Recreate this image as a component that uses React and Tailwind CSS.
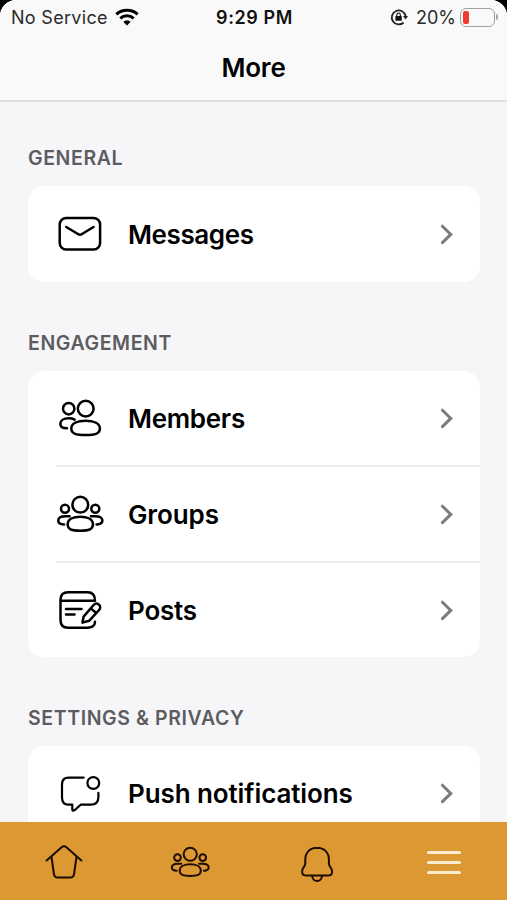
function Icon({ className = 'size-12', strokeWidth = 2.5, box = 48, children }) {
  return (
    <svg
      viewBox={`0 0 ${box} ${box}`}
      className={className}
      fill="none"
      stroke="currentColor"
      strokeWidth={strokeWidth}
      strokeLinecap="round"
      strokeLinejoin="round"
    >
      {children}
    </svg>
  );
}

function MailIcon() {
  return (
    <Icon>
      <rect x="3.7" y="8" width="40.4" height="31.6" rx="6.5" />
      <path d="M10.2 17 L22 24 Q24 25.4 26 24 L37.5 17" />
    </Icon>
  );
}

function MembersIcon() {
  return (
    <Icon>
      <circle cx="29.7" cy="14.6" r="7.9" />
      <circle cx="12.7" cy="14.7" r="5.7" />
      <path d="M29.6 26.7 C37 26.7 43.9 29 43.9 34.6 C43.9 40 38.6 41 29.6 41 C20.6 41 15.3 40 15.3 34.6 C15.3 29 22 26.7 29.6 26.7 Z" />
      <path d="M18.6 25.6 C16.8 24.6 14.8 24.3 12.6 24.3 C8 24.3 4.3 26.4 4.3 30 C4.3 33.2 7 34.3 11 34.3" />
    </Icon>
  );
}

function GroupsIcon({ className, strokeWidth }) {
  return (
    <Icon className={className} strokeWidth={strokeWidth}>
      <circle cx="24.3" cy="14.7" r="7.9" />
      <circle cx="9" cy="18.7" r="4" />
      <circle cx="39.3" cy="18.7" r="4" />
      <path d="M24.3 26.7 C31 26.7 37 29 37 34.3 C37 39.6 32.5 40.7 24.3 40.7 C16.1 40.7 11.6 39.6 11.6 34.3 C11.6 29 17.6 26.7 24.3 26.7 Z" />
      <path d="M13.6 26.2 H9.6 C5 26.2 2.2 27.8 2.2 30.6 C2.2 33.3 4.4 34.4 8 34.4" />
      <path d="M35 26.2 H39 C43.6 26.2 46.4 27.8 46.4 30.6 C46.4 33.3 44.2 34.4 40.6 34.4" />
    </Icon>
  );
}

function PostsIcon() {
  return (
    <Icon>
      <path d="M4.5 14.7 H39 C39 9.5 36.5 6.3 31.5 6.3 H12 C7.2 6.3 4.5 9.3 4.5 14 V34 C4.5 39 7.2 41.7 12 41.7 H31.5 C36 41.7 39 39.5 39 35.8" />
      <path d="M10 23 H25.5 M10 28.4 H18.5" />
      <path d="M27.6 30.6 L37.6 19 C39.2 17.2 41.4 17.3 42.9 18.6 C44.5 20 44.7 22.2 43.1 24 L33.1 34.8 L26.5 36.6 Z M34.8 22.4 L40 26.8" />
    </Icon>
  );
}

function PushIcon() {
  return (
    <Icon strokeWidth={2.2}>
      <path d="M27.6 8.7 H12.5 C8 8.7 6 11.2 6 15.5 V28.5 C6 33.5 8 35.7 12.5 35.7 H16.3 V40.6 Q16.5 42.6 18.6 41.2 L24.7 35.7 H34.5 C40 35.7 42.4 33 42.4 28 V23.8" />
      <circle cx="37.3" cy="14" r="5.9" />
    </Icon>
  );
}

function Chevron() {
  return (
    <svg
      viewBox="0 0 16 24"
      className="h-6 w-4 text-[#7c7c7e]"
      fill="none"
      stroke="currentColor"
      strokeWidth="3"
      strokeLinecap="round"
    >
      <path d="M3.4 4.2 L11.8 12.4 L3.4 20.6" />
    </svg>
  );
}

const sections = [
  {
    title: 'GENERAL',
    cardClass: 'py-px',
    items: [{ label: 'Messages', icon: MailIcon, tracking: 'tracking-[-0.4px]' }],
  },
  {
    title: 'ENGAGEMENT',
    items: [
      { label: 'Members', icon: MembersIcon, tracking: 'tracking-[-0.3px]' },
      { label: 'Groups', icon: GroupsIcon, tracking: 'tracking-[-0.1px]' },
      { label: 'Posts', icon: PostsIcon, tracking: 'tracking-[-0.2px]' },
    ],
  },
  {
    title: 'SETTINGS & PRIVACY',
    items: [{ label: 'Push notifications', icon: PushIcon, tracking: 'tracking-[-0.1px]' }],
  },
];

function StatusBar() {
  return (
    <div className="grid h-[34px] grid-cols-3 items-center pr-[9px] pl-[11px] text-[18px] text-[#2b2b2b]">
      <div className="flex items-center gap-[7px] whitespace-nowrap">
        <span className="tracking-[0.3px]">No Service</span>
        <svg viewBox="0 0 24 18" className="h-[18px] w-6" fill="none" stroke="#000" strokeWidth="3">
          <path d="M1.4 6.3 C7 0.9 17 0.9 22.6 6.3" />
          <path d="M5.3 10.3 C9 6.8 15 6.8 18.7 10.3" />
          <path d="M12 17.6 L8.3 13.8 C10.3 12 13.7 12 15.7 13.8 Z" fill="#000" stroke="none" />
        </svg>
      </div>
      <div className="text-center font-semibold tracking-[0.6px] whitespace-nowrap text-[#111]">
        9:29 PM
      </div>
      <div className="flex items-center justify-end whitespace-nowrap">
        <svg viewBox="0 0 18 18" className="mr-2 size-[18px]" fill="none" stroke="#222" strokeWidth="1.8">
          <path d="M13.6 14.5 A7 7 0 1 1 15.6 8" />
          <path d="M13 8 H18 L15.5 11.6 Z" fill="#222" stroke="none" />
          <rect x="5.4" y="8" width="6.4" height="4.8" rx="0.6" fill="#111" stroke="none" />
          <path d="M6.8 8.5 V7 A1.8 1.8 0 0 1 10.4 7 V8.5" strokeWidth="1.2" />
        </svg>
        <span>20%</span>
        <span className="ml-1 flex h-[19px] w-[35px] rounded-[6px] border-[1.5px] border-[#a0a0a0] p-[2px]">
          <span className="w-[6px] rounded-[2px] bg-[#f2392f]" />
        </span>
        <span className="ml-px h-[6px] w-[2px] rounded-r bg-[#a5a5a5]" />
      </div>
    </div>
  );
}

function Row({ label, icon: RowIcon, tracking, divided }) {
  return (
    <div className={divided ? 'ml-7 border-t-2 border-[#ececed]' : 'ml-7'}>
      <div className="flex h-[94px] items-center pr-[25px]">
        <RowIcon />
        <span className={`ml-6 flex-1 text-[26px] font-semibold ${tracking}`}>{label}</span>
        <Chevron />
      </div>
    </div>
  );
}

function Section({ title, items, cardClass = '' }) {
  return (
    <section>
      <h2 className="flex h-[29px] items-center pt-[2px] text-[19.5px] font-semibold tracking-[0.6px] text-[#5c5c60]">
        {title}
      </h2>
      <div className={`mt-[14px] rounded-[16px] bg-white ${cardClass}`}>
        {items.map((item, i) => (
          <Row key={item.label} {...item} divided={i > 0} />
        ))}
      </div>
    </section>
  );
}

function TabBar() {
  return (
    <nav className="grid h-[78px] shrink-0 grid-cols-4 place-items-center bg-[#db9833] pt-[2px] text-[#1f0d04]">
      <Icon className="size-10" box={40} strokeWidth={2}>
        <path d="M3.6 18.6 L18.6 5.2 Q21 3.4 23.4 5.2 L38.4 18.6" />
        <path d="M8.5 15 L10.9 31.8 Q11.5 35.6 15 35.6 H27 Q30.5 35.6 31.1 31.8 L33.5 15" />
      </Icon>
      <GroupsIcon className="size-10" strokeWidth={2.4} />
      <Icon className="size-10" box={40} strokeWidth={2}>
        <path d="M20 5.8 C12.8 5.8 8.3 10.8 8.3 17.5 V21.5 C8.3 24.7 5.1 25.6 5.1 29.4 C5.1 32.2 7 33.6 9.6 33.6 H30.6 C33.2 33.6 35.1 32.2 35.1 29.4 C35.1 25.6 31.9 24.7 31.9 21.5 V17.5 C31.9 10.8 27.4 5.8 20 5.8 Z" />
        <path d="M15.3 34 C15.3 37 17.4 39 20.1 39 C22.8 39 24.9 37 24.9 34" />
      </Icon>
      <div className="flex h-[23px] w-[34px] flex-col justify-between">
        <span className="h-[3px] rounded-sm bg-[#fdebd0]" />
        <span className="h-[3px] rounded-sm bg-[#fdebd0]" />
        <span className="h-[3px] rounded-sm bg-[#fdebd0]" />
      </div>
    </nav>
  );
}

export default function App() {
  return (
    <div className="h-[900px] w-[507px] overflow-hidden bg-black font-['Inter',sans-serif] text-black">
      <div className="flex h-full flex-col overflow-hidden rounded-t-[16px] bg-[#f6f6f9]">
        <header className="h-[102px] shrink-0 border-b-2 border-[#dfdfe1] bg-[#f9f9f9]">
          <StatusBar />
          <h1 className="flex h-[66px] items-center justify-center text-[26px] font-semibold tracking-[-0.2px]">
            More
          </h1>
        </header>
        <main className="flex min-h-0 flex-1 flex-col gap-[46px] overflow-hidden pt-[41px] pr-[27px] pl-7">
          {sections.map((section) => (
            <Section key={section.title} {...section} />
          ))}
        </main>
        <TabBar />
      </div>
    </div>
  );
}
